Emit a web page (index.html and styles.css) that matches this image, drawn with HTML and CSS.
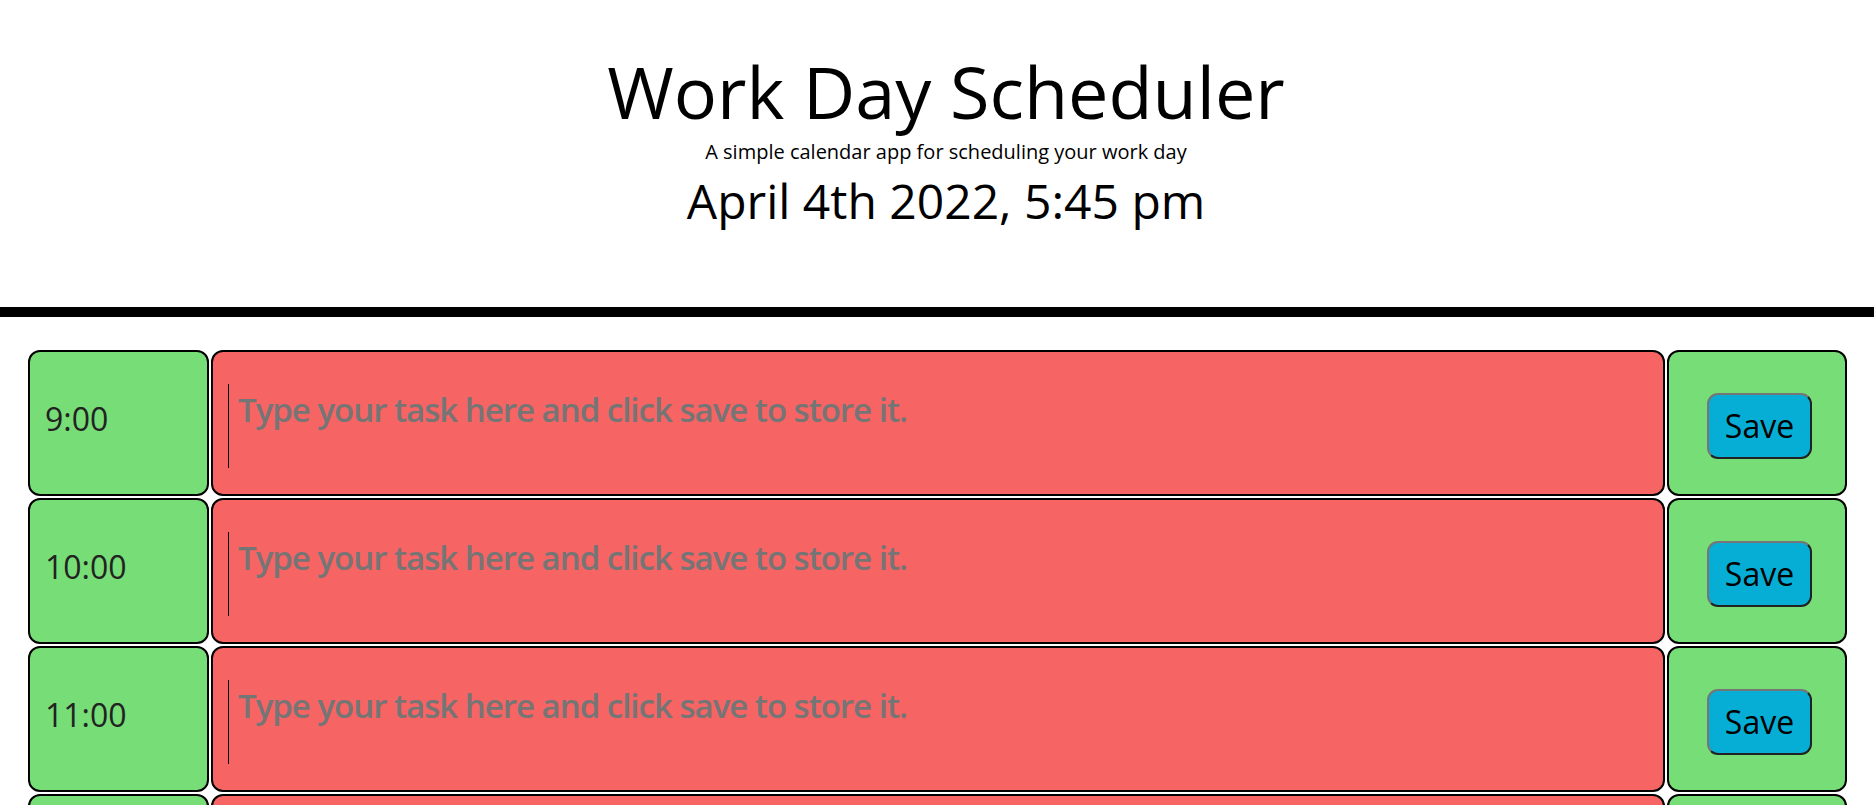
FILE: index.html
```html
<!DOCTYPE html>
<html lang="en">
<head>
<meta charset="utf-8">
<title>Work Day Scheduler</title>
<link rel="stylesheet" href="styles.css">
</head>
<body>
<header class="jumbotron">
  <h1 class="title">Work Day Scheduler</h1>
  <p class="lead">A simple calendar app for scheduling your work day</p>
  <p class="current-day">April 4th 2022, 5:45 pm</p>
</header>
<main class="container">
  <div class="row">
    <div class="hour future">9:00</div>
    <div class="description present"><textarea class="task" placeholder="Type your task here and click save to store it."></textarea></div>
    <div class="save-col future"><button class="saveBtn">Save</button></div>
  </div>
  <div class="row">
    <div class="hour future">10:00</div>
    <div class="description present"><textarea class="task" placeholder="Type your task here and click save to store it."></textarea></div>
    <div class="save-col future"><button class="saveBtn">Save</button></div>
  </div>
  <div class="row">
    <div class="hour future">11:00</div>
    <div class="description present"><textarea class="task" placeholder="Type your task here and click save to store it."></textarea></div>
    <div class="save-col future"><button class="saveBtn">Save</button></div>
  </div>
  <div class="row">
    <div class="hour future">12:00</div>
    <div class="description present"><textarea class="task" placeholder="Type your task here and click save to store it."></textarea></div>
    <div class="save-col future"><button class="saveBtn">Save</button></div>
  </div>
  <div class="row">
    <div class="hour future">13:00</div>
    <div class="description present"><textarea class="task" placeholder="Type your task here and click save to store it."></textarea></div>
    <div class="save-col future"><button class="saveBtn">Save</button></div>
  </div>
  <div class="row">
    <div class="hour future">14:00</div>
    <div class="description present"><textarea class="task" placeholder="Type your task here and click save to store it."></textarea></div>
    <div class="save-col future"><button class="saveBtn">Save</button></div>
  </div>
  <div class="row">
    <div class="hour future">15:00</div>
    <div class="description present"><textarea class="task" placeholder="Type your task here and click save to store it."></textarea></div>
    <div class="save-col future"><button class="saveBtn">Save</button></div>
  </div>
  <div class="row">
    <div class="hour future">16:00</div>
    <div class="description present"><textarea class="task" placeholder="Type your task here and click save to store it."></textarea></div>
    <div class="save-col future"><button class="saveBtn">Save</button></div>
  </div>
  <div class="row">
    <div class="hour future">17:00</div>
    <div class="description present"><textarea class="task" placeholder="Type your task here and click save to store it."></textarea></div>
    <div class="save-col future"><button class="saveBtn">Save</button></div>
  </div>
</main>
</body>
</html>
```
FILE: styles.css
```css
* { box-sizing: border-box; }

body {
  margin: 0;
  font-family: "Open Sans", "Noto Sans", sans-serif;
  font-size: 16px;
  color: #000;
  background: #fff;
}

.jumbotron {
  text-align: center;
  padding: 48px 32px 77px 50px;
  border-bottom: 10px solid #000;
  margin-bottom: 33px;
}

.title {
  margin: 0;
  font-size: 72px;
  font-weight: 400;
  line-height: 1.2;
}

.lead {
  margin: 3px 0 0;
  font-size: 20px;
  font-weight: 400;
  line-height: 1.5;
}

.current-day {
  margin: 5px 0 0;
  font-size: 48px;
  font-weight: 400;
  line-height: 1.2;
}

.container {
  padding: 0 27px 0 28px;
  display: flex;
  flex-direction: column;
  gap: 2px;
}

.row {
  display: grid;
  grid-template-columns: 181px 1fr 180px;
  column-gap: 2px;
  height: 146px;
}

.future { background-color: #77dd77; }
.present { background-color: #f66464; }

.hour,
.description,
.save-col {
  border: 2px solid #000;
  border-radius: 12px;
}

.hour {
  display: flex;
  align-items: center;
  padding: 0 0 8px 15px;
  font-size: 32px;
  line-height: 1;
  color: #222;
}

.description {
  padding: 32px 15px 26px;
}

.task {
  display: block;
  width: 100%;
  height: 84px;
  background: transparent;
  border: none;
  border-left: 1px solid #000;
  resize: none;
  padding: 9px 9px;
  margin: 0;
  font-family: "Open Sans", "Noto Sans", sans-serif;
  font-size: 33px;
  font-weight: 600;
  letter-spacing: -1px;
  line-height: 1;
  color: #000;
  outline: none;
}

.task::placeholder {
  color: #757575;
  opacity: 1;
}

.save-col {
  display: flex;
  align-items: center;
  justify-content: center;
  padding: 6px 0 0 5px;
}

.saveBtn {
  width: 105px;
  height: 66px;
  background-color: #06aed5;
  border: 2px outset #767676;
  border-radius: 11px;
  font-family: "Open Sans", "Noto Sans", sans-serif;
  font-size: 32px;
  font-weight: 500;
  color: #000;
  padding: 0;
  line-height: 1;
}
```
